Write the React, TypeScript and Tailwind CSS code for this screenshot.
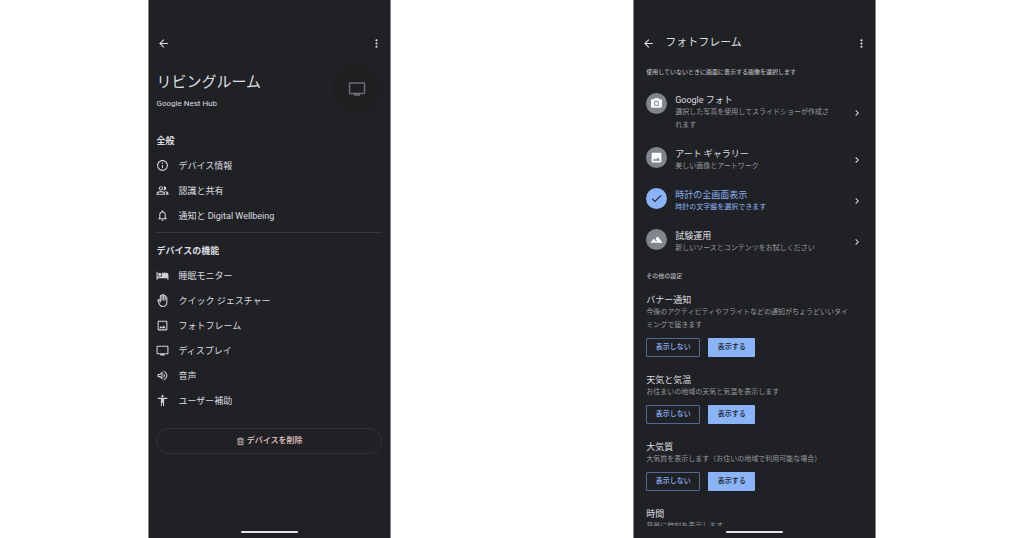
import type { ReactNode } from "react";
import type { IconType } from "react-icons";
import {
  MdArrowBack,
  MdMoreVert,
  MdInfoOutline,
  MdOutlinePeopleAlt,
  MdNotificationsNone,
  MdOutlineBackHand,
  MdOutlineImage,
  MdOutlineTv,
  MdOutlineVolumeUp,
  MdAccessibility,
  MdChevronRight,
  MdCameraAlt,
  MdImage,
  MdCheck,
  MdLandscape,
  MdHotel,
} from "react-icons/md";
import { clsx } from "clsx";

const generalItems = [
  { name: "デバイス情報", icon: MdInfoOutline },
  { name: "認識と共有", icon: MdOutlinePeopleAlt },
  { name: "通知と Digital Wellbeing", icon: MdNotificationsNone },
];

const featureItems = [
  { name: "睡眠モニター", icon: MdHotel },
  { name: "クイック ジェスチャー", icon: MdOutlineBackHand },
  { name: "フォトフレーム", icon: MdOutlineImage },
  { name: "ディスプレイ", icon: MdOutlineTv },
  { name: "音声", icon: MdOutlineVolumeUp },
  { name: "ユーザー補助", icon: MdAccessibility },
];

const sources = [
  {
    name: "Google フォト",
    lines: ["選択した写真を使用してスライドショーが作成さ", "れます"],
    icon: MdCameraAlt,
  },
  { name: "アート ギャラリー", lines: ["美しい画像とアートワーク"], icon: MdImage },
  {
    name: "時計の全画面表示",
    lines: ["時計の文字盤を選択できます"],
    icon: MdCheck,
    selected: true,
  },
  {
    name: "試験運用",
    lines: ["新しいソースとコンテンツをお試しください"],
    icon: MdLandscape,
  },
];

const settings = [
  {
    name: "バナー通知",
    lines: [
      "今後のアクティビティやフライトなどの通知がちょうどいいタイ",
      "ミングで届きます",
    ],
    toggle: true,
  },
  { name: "天気と気温", lines: ["お住まいの地域の天気と気温を表示します"], toggle: true },
  {
    name: "大気質",
    lines: ["大気質を表示します（お住いの地域で利用可能な場合）"],
    toggle: true,
  },
  { name: "時間", lines: ["背景に時刻を表示します"] },
];

function TrashIcon({ className }: { className?: string }) {
  return (
    <svg viewBox="0 0 24 24" fill="none" stroke="currentColor" strokeWidth="2.2" className={className}>
      <path d="M3 5.5h18M9 5V3h6v2M5.5 6v14.5h13V6M10 9.5v7.5M14 9.5v7.5" />
    </svg>
  );
}

function Phone({ className, children }: { className?: string; children: ReactNode }) {
  return (
    <section
      className={clsx(
        "flex h-screen min-w-0 flex-col border-x border-[#85868a] bg-[#202124] pt-[26px] text-[#dcdde0]",
        className
      )}
    >
      <div className="min-h-0 flex-1 overflow-hidden">{children}</div>
      <div className="flex h-3 shrink-0 items-center justify-center">
        <div className="h-[2px] w-[57px] rounded-full bg-[#e3e4e3]" />
      </div>
    </section>
  );
}

function TopBar({ title }: { title?: string }) {
  return (
    <header className="flex h-[34px] items-center pr-[7px] pl-2">
      <button type="button" aria-label="戻る">
        <MdArrowBack className="size-[13px]" />
      </button>
      {title && <h1 className="ml-[10px] text-[11px] leading-4">{title}</h1>}
      <button type="button" aria-label="その他" className="ml-auto">
        <MdMoreVert className="size-[13px]" />
      </button>
    </header>
  );
}

function Menu({ title, items }: { title: string; items: { name: string; icon: IconType }[] }) {
  return (
    <div>
      <h2 className="mb-1 text-[9px] leading-4 font-bold">{title}</h2>
      <ul>
        {items.map((item) => (
          <li key={item.name}>
            <a href="#" className="flex h-[25px] items-center gap-[9px] text-[9px] leading-4">
              <item.icon className="size-[13px] shrink-0 text-[#d0d1d4]" />
              {item.name}
            </a>
          </li>
        ))}
      </ul>
    </div>
  );
}

function Lines({ lines, className }: { lines: string[]; className?: string }) {
  return (
    <p className={clsx("text-[7px] leading-[13px] whitespace-nowrap", className)}>
      {lines.map((line) => (
        <span key={line} className="block">
          {line}
        </span>
      ))}
    </p>
  );
}

export default function App() {
  return (
    <main className="grid min-h-screen grid-cols-3 bg-white px-[14.5%] font-[Roboto,'Noto_Sans_CJK_JP',sans-serif]">
      {/* Device settings */}
      <Phone>
        <TopBar />
        <div className="pr-2 pl-[7px]">
          <div className="flex items-start justify-between pt-1">
            <div className="pt-2">
              <h1 className="text-[15px] leading-5">リビングルーム</h1>
              <p className="mt-[6px] text-[8px] leading-3">Google Nest Hub</p>
            </div>
            <div className="flex size-[50px] items-center justify-center rounded-full bg-[#1e1f20]">
              <MdOutlineTv className="size-[18px] text-[#6b6e73]" />
            </div>
          </div>
          <div className="mt-[19px] border-b border-[#36373a] pb-1">
            <Menu title="全般" items={generalItems} />
          </div>
          <div className="mt-[10px]">
            <Menu title="デバイスの機能" items={featureItems} />
          </div>
          <button
            type="button"
            className="mt-[15px] flex h-[26px] w-full items-center justify-center gap-[2px] rounded-full border border-[#303134] text-[8px] font-medium text-[#e9cdc9]"
          >
            <TrashIcon className="size-[9px]" />
            デバイスを削除
          </button>
        </div>
      </Phone>

      {/* Photo frame settings */}
      <Phone className="col-start-3">
        <TopBar title="フォトフレーム" />
        <div className="px-3 pt-[6px]">
          <h2 className="text-[6px] leading-3 font-medium text-[#b4b6ba]">
            使用していないときに画面に表示する画像を選択します
          </h2>
          <ul className="mt-[15px] flex flex-col gap-[15px]">
            {sources.map((source) => (
              <li key={source.name}>
                <a href="#" className="flex items-center">
                  <span
                    className={clsx(
                      "flex size-[21px] shrink-0 items-center justify-center self-start rounded-full",
                      source.selected ? "bg-[#8ab4f8] text-[#202124]" : "bg-[#80868b] text-white"
                    )}
                  >
                    <source.icon className="size-[13px]" />
                  </span>
                  <span className="ml-2 block pt-px">
                    <span
                      className={clsx(
                        "block text-[9px] leading-3",
                        source.selected && "text-[#8ab4f8]"
                      )}
                    >
                      {source.name}
                    </span>
                    <Lines
                      lines={source.lines}
                      className={source.selected ? "text-[#8ab4f8]" : "text-[#96999d]"}
                    />
                  </span>
                  <MdChevronRight className="ml-auto size-3 shrink-0" />
                </a>
              </li>
            ))}
          </ul>
          <h2 className="mt-[15px] text-[6px] leading-3 font-medium text-[#b4b6ba]">その他の設定</h2>
          <div className="mt-3 flex flex-col gap-[17px]">
            {settings.map((setting) => (
              <div key={setting.name}>
                <h3 className="text-[9px] leading-3">{setting.name}</h3>
                <Lines lines={setting.lines} className="text-[#96999d]" />
                {setting.toggle && (
                  <div className="mt-[6px] flex gap-2 text-[7px] font-medium">
                    <button
                      type="button"
                      className="h-[19px] w-[54px] rounded-[1px] border border-[#4f6a96] text-[#8ab4f8]"
                    >
                      表示しない
                    </button>
                    <button
                      type="button"
                      className="h-[19px] w-[47px] rounded-[1px] bg-[#8ab4f8] text-[#202124]"
                    >
                      表示する
                    </button>
                  </div>
                )}
              </div>
            ))}
          </div>
        </div>
      </Phone>
    </main>
  );
}
